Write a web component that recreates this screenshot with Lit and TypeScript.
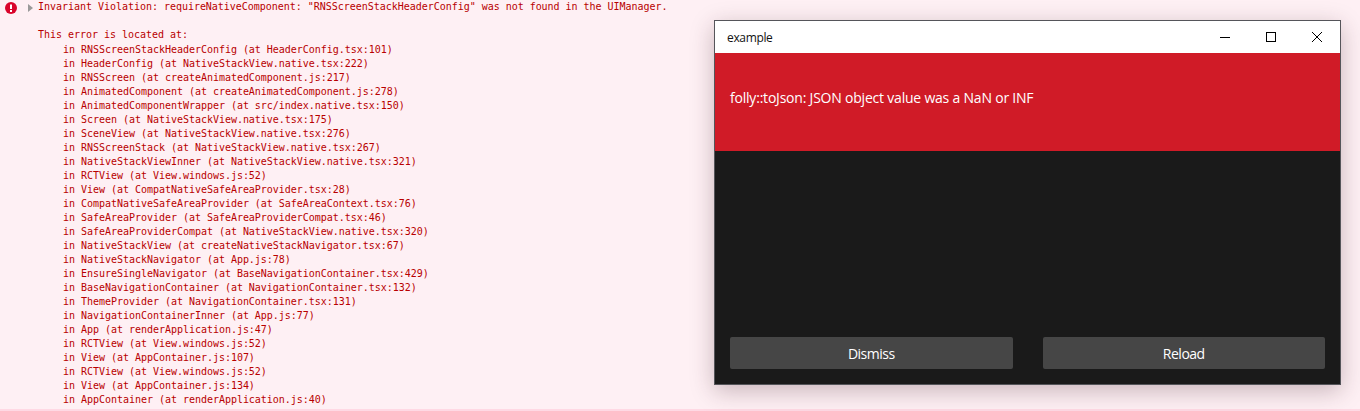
import { LitElement, html, css } from "lit";
import { customElement } from "lit/decorators.js";

const FRAMES = [
  "RNSScreenStackHeaderConfig (at HeaderConfig.tsx:101)",
  "HeaderConfig (at NativeStackView.native.tsx:222)",
  "RNSScreen (at createAnimatedComponent.js:217)",
  "AnimatedComponent (at createAnimatedComponent.js:278)",
  "AnimatedComponentWrapper (at src/index.native.tsx:150)",
  "Screen (at NativeStackView.native.tsx:175)",
  "SceneView (at NativeStackView.native.tsx:276)",
  "RNSScreenStack (at NativeStackView.native.tsx:267)",
  "NativeStackViewInner (at NativeStackView.native.tsx:321)",
  "RCTView (at View.windows.js:52)",
  "View (at CompatNativeSafeAreaProvider.tsx:28)",
  "CompatNativeSafeAreaProvider (at SafeAreaContext.tsx:76)",
  "SafeAreaProvider (at SafeAreaProviderCompat.tsx:46)",
  "SafeAreaProviderCompat (at NativeStackView.native.tsx:320)",
  "NativeStackView (at createNativeStackNavigator.tsx:67)",
  "NativeStackNavigator (at App.js:78)",
  "EnsureSingleNavigator (at BaseNavigationContainer.tsx:429)",
  "BaseNavigationContainer (at NavigationContainer.tsx:132)",
  "ThemeProvider (at NavigationContainer.tsx:131)",
  "NavigationContainerInner (at App.js:77)",
  "App (at renderApplication.js:47)",
  "RCTView (at View.windows.js:52)",
  "View (at AppContainer.js:107)",
  "RCTView (at View.windows.js:52)",
  "View (at AppContainer.js:134)",
  "AppContainer (at renderApplication.js:40)",
];

@customElement("app-root")
export class AppRoot extends LitElement {
  static styles = css`
    :host {
      display: block;
      position: relative;
      height: 411px;
      overflow: hidden;
      background: #fef0f4;
      box-sizing: border-box;
    }
    .console {
      display: flex;
      align-items: flex-start;
      height: 411px;
      box-sizing: border-box;
      border-bottom: 2px solid #ffd9e4;
      overflow: hidden;
      padding-left: 5px;
      font-family: "DejaVu Sans Mono", monospace;
      font-size: 10px;
      line-height: 14px;
      letter-spacing: -0.025px;
      color: #b80000;
    }
    .err {
      flex: none;
      width: 12px;
      height: 12px;
      margin-top: 2px;
    }
    .tri {
      flex: none;
      width: 0;
      height: 0;
      margin: 4px 5px 0 11px;
      border-left: 5px solid #9a9a9a;
      border-top: 4px solid transparent;
      border-bottom: 4px solid transparent;
    }
    .msg { white-space: nowrap; }
    .first { margin-bottom: 14px; }
    .located { margin-bottom: 1px; }
    .frame { padding-left: 25px; }
    .window {
      position: absolute;
      left: 714px;
      top: 20px;
      width: 627px;
      height: 365px;
      box-sizing: border-box;
      border: 1px solid #55555a;
      display: flex;
      flex-direction: column;
      box-shadow: 0 6px 22px rgba(60, 30, 40, 0.28);
      font-family: "Open Sans", sans-serif;
    }
    .titlebar {
      flex: none;
      height: 32px;
      background: #fff;
      display: flex;
      align-items: center;
      padding-left: 12px;
      font-size: 12px;
      letter-spacing: -0.35px;
      color: #111;
    }
    .title { flex: 1; }
    .ctl {
      flex: none;
      width: 46px;
      height: 32px;
      display: flex;
      align-items: center;
      justify-content: center;
    }
    .banner {
      flex: none;
      height: 98px;
      box-sizing: border-box;
      background: #d01b27;
      color: #fff;
      padding: 35px 0 0 15px;
      font-size: 14px;
      line-height: 20px;
      letter-spacing: -0.21px;
    }
    .body {
      flex: 1;
      background: #1a1a1a;
      display: flex;
      align-items: flex-end;
      gap: 30px;
      padding: 0 15px 15px;
    }
    .btn {
      flex: 1;
      height: 32px;
      background: #464646;
      border-radius: 2px;
      color: #fff;
      font-size: 14px;
      letter-spacing: -0.5px;
      display: flex;
      align-items: center;
      justify-content: center;
    }
  `;

  render() {
    return html`
      <div class="console">
        <svg class="err" viewBox="0 0 12 12">
          <circle cx="6" cy="6" r="6" fill="#d9042b"></circle>
          <rect x="5" y="2.5" width="2" height="4.5" fill="#fff"></rect>
          <rect x="5" y="8" width="2" height="2" fill="#fff"></rect>
        </svg>
        <div class="tri"></div>
        <div class="msg">
          <div class="first">Invariant Violation: requireNativeComponent: "RNSScreenStackHeaderConfig" was not found in the UIManager.</div>
          <div class="located">This error is located at:</div>
          ${FRAMES.map((f) => html`<div class="frame">in ${f}</div>`)}
        </div>
      </div>
      <div class="window">
        <div class="titlebar">
          <span class="title">example</span>
          <div class="ctl">
            <svg width="12" height="12" viewBox="0 0 12 12"><path d="M1 6.5h10" stroke="#000" fill="none"></path></svg>
          </div>
          <div class="ctl">
            <svg width="12" height="12" viewBox="0 0 12 12"><rect x="1.5" y="1.5" width="9" height="9" stroke="#000" fill="none"></rect></svg>
          </div>
          <div class="ctl">
            <svg width="12" height="12" viewBox="0 0 12 12"><path d="M1 1l10 10M11 1L1 11" stroke="#000" fill="none"></path></svg>
          </div>
        </div>
        <div class="banner">folly::toJson: JSON object value was a NaN or INF</div>
        <div class="body">
          <div class="btn">Dismiss</div>
          <div class="btn">Reload</div>
        </div>
      </div>
    `;
  }
}
